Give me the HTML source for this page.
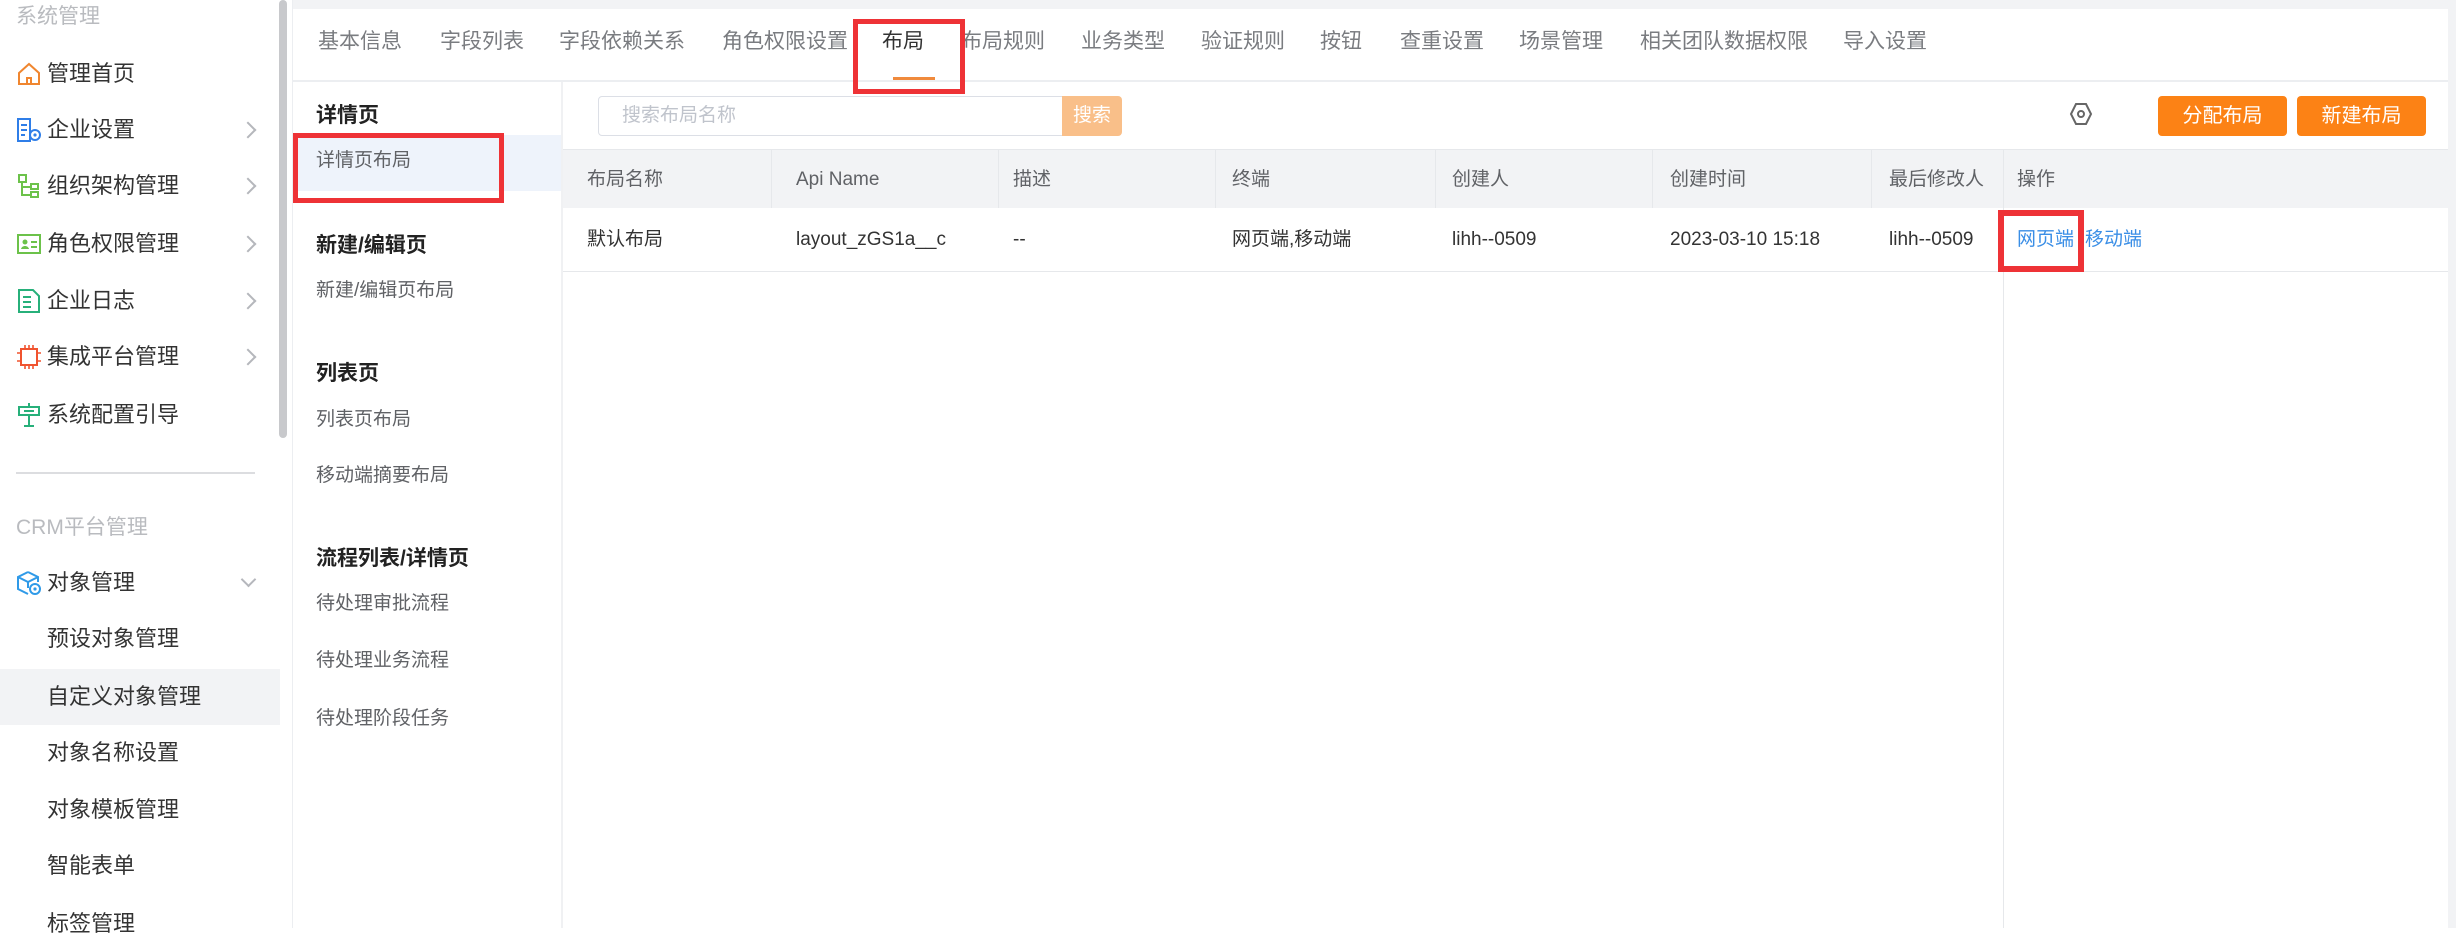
<!DOCTYPE html>
<html><head><meta charset="utf-8">
<style>
*{margin:0;padding:0;box-sizing:border-box}
body{width:2456px;height:928px;overflow:hidden;background:#fff;font-family:"Liberation Sans","Noto Sans CJK SC",sans-serif;position:relative}
.a{position:absolute;white-space:nowrap}
.sb{font-size:22px;color:#333;line-height:22px}
.ic{position:absolute;left:16px;width:26px;height:26px}
.chev{position:absolute;left:244px;width:12px;height:12px;border-right:2px solid #b5b7bc;border-top:2px solid #b5b7bc;transform:rotate(45deg)}
.tab{font-size:21px;color:#7a7c80;line-height:22px;top:31px}
.sn{font-size:19px;color:#606266;line-height:20px;left:316px}
.sh{font-size:21px;color:#222;font-weight:bold;line-height:22px;left:316px}
.th{font-size:19px;color:#606266;line-height:20px;top:170px}
.td{font-size:19px;color:#333;line-height:20px;top:230px}
.vl{position:absolute;width:1px;background:#e6e8eb}
</style></head><body>
<!-- sidebar -->
<div class="a" style="left:16px;top:6px;font-size:21px;color:#b9bbbf;line-height:22px">系统管理</div>
<svg class="ic" style="top:61px" viewBox="0 0 26 26"><path d="M3 12 L13 3 L23 12 V23 H3 Z M11 23 V17 H15 V23" fill="none" stroke="#f0862f" stroke-width="2"/></svg>
<div class="a sb" style="left:47px;top:63px">管理首页</div>
<svg class="ic" style="top:117px" viewBox="0 0 26 26"><rect x="2" y="2" width="12" height="22" fill="none" stroke="#2f7ee8" stroke-width="2"/><path d="M5 8h6M5 13h6M5 18h4" stroke="#2f7ee8" stroke-width="2"/><circle cx="19" cy="18" r="5" fill="#fff" stroke="#2f7ee8" stroke-width="2"/><circle cx="19" cy="18" r="1.6" fill="#2f7ee8"/></svg>
<div class="a sb" style="left:47px;top:119px">企业设置</div><div class="chev" style="top:124px;left:242px"></div>
<svg class="ic" style="top:173px" viewBox="0 0 26 26"><rect x="3" y="2" width="7" height="7" fill="none" stroke="#6cc24a" stroke-width="2"/><rect x="15" y="11" width="7" height="5" fill="none" stroke="#6cc24a" stroke-width="2"/><rect x="15" y="19" width="7" height="5" fill="none" stroke="#6cc24a" stroke-width="2"/><path d="M6 9V22H15M6 14H15" fill="none" stroke="#6cc24a" stroke-width="2"/></svg>
<div class="a sb" style="left:47px;top:175px">组织架构管理</div><div class="chev" style="top:180px;left:242px"></div>
<svg class="ic" style="top:231px" viewBox="0 0 26 26"><rect x="2" y="4" width="22" height="18" fill="none" stroke="#6cc24a" stroke-width="2"/><circle cx="9" cy="11" r="2.5" fill="#6cc24a"/><path d="M5 18c1-4 7-4 8 0z" fill="#6cc24a"/><path d="M15 11h6M15 16h6" stroke="#6cc24a" stroke-width="2"/></svg>
<div class="a sb" style="left:47px;top:233px">角色权限管理</div><div class="chev" style="top:238px;left:242px"></div>
<svg class="ic" style="top:288px" viewBox="0 0 26 26"><path d="M3 2H17L23 8V24H3Z" fill="none" stroke="#27b07a" stroke-width="2"/><path d="M7 9h8M7 14h8M7 19h8" stroke="#27b07a" stroke-width="2"/></svg>
<div class="a sb" style="left:47px;top:290px">企业日志</div><div class="chev" style="top:295px;left:242px"></div>
<svg class="ic" style="top:344px" viewBox="0 0 26 26"><rect x="5" y="5" width="16" height="16" fill="none" stroke="#f0532f" stroke-width="2"/><path d="M9 1v4M13 1v4M17 1v4M9 21v4M13 21v4M17 21v4M1 9h4M1 17h4M21 9h4M21 17h4" stroke="#f0532f" stroke-width="1.6"/></svg>
<div class="a sb" style="left:47px;top:346px">集成平台管理</div><div class="chev" style="top:351px;left:242px"></div>
<svg class="ic" style="top:402px" viewBox="0 0 26 26"><path d="M13 1v4M3 5h20v8H3zM3 13h20M13 13v12M8 24h10M8 9h10" fill="none" stroke="#27b07a" stroke-width="2"/></svg>
<div class="a sb" style="left:47px;top:404px">系统配置引导</div>
<div class="a" style="left:279px;top:0;width:8px;height:438px;background:#c8c9cc;border-radius:4px"></div>
<div class="a" style="left:16px;top:472px;width:239px;height:2px;background:#dcdde0"></div>
<div class="a" style="left:16px;top:517px;font-size:21px;color:#b9bbbf;line-height:22px">CRM平台管理</div>
<svg class="ic" style="top:570px" viewBox="0 0 26 26"><path d="M12 2L22 7V12M12 2L2 7V19L12 24M2 7L12 12L22 7M12 12V18" fill="none" stroke="#2f9ae8" stroke-width="2"/><circle cx="19" cy="19" r="5" fill="#fff" stroke="#2f9ae8" stroke-width="2"/><circle cx="19" cy="19" r="1.6" fill="#2f9ae8"/></svg>
<div class="a sb" style="left:47px;top:572px">对象管理</div>
<div class="a" style="left:243px;top:574px;width:11px;height:11px;border-right:2px solid #b5b7bc;border-bottom:2px solid #b5b7bc;transform:rotate(45deg)"></div>
<div class="a sb" style="left:47px;top:628px">预设对象管理</div>
<div class="a" style="left:0;top:669px;width:280px;height:56px;background:#f2f3f5"></div>
<div class="a sb" style="left:47px;top:686px">自定义对象管理</div>
<div class="a sb" style="left:47px;top:742px">对象名称设置</div>
<div class="a sb" style="left:47px;top:799px">对象模板管理</div>
<div class="a sb" style="left:47px;top:855px">智能表单</div>
<div class="a sb" style="left:47px;top:913px">标签管理</div>
<!-- main frame -->
<div class="a" style="left:292px;top:0;width:1px;height:928px;background:#eceef1"></div>
<div class="a" style="left:293px;top:0;width:2163px;height:9px;background:#f2f3f5"></div>
<div class="a" style="left:2448px;top:0;width:8px;height:928px;background:#f2f3f5"></div>
<div class="a" style="left:293px;top:80px;width:2155px;height:2px;background:#eceef1"></div>
<div class="a tab" style="left:318px">基本信息</div>
<div class="a tab" style="left:440px">字段列表</div>
<div class="a tab" style="left:559px">字段依赖关系</div>
<div class="a tab" style="left:722px">角色权限设置</div>
<div class="a tab" style="left:882px;color:#333">布局</div>
<div class="a tab" style="left:961px">布局规则</div>
<div class="a tab" style="left:1081px">业务类型</div>
<div class="a tab" style="left:1201px">验证规则</div>
<div class="a tab" style="left:1320px">按钮</div>
<div class="a tab" style="left:1400px">查重设置</div>
<div class="a tab" style="left:1519px">场景管理</div>
<div class="a tab" style="left:1640px">相关团队数据权限</div>
<div class="a tab" style="left:1843px">导入设置</div>
<div class="a" style="left:893px;top:77px;width:42px;height:3px;background:#f08a3c"></div>
<div class="a" style="left:853px;top:19px;width:112px;height:75px;border:5px solid #ee3236"></div>
<!-- subnav -->
<div class="a" style="left:561px;top:82px;width:2px;height:846px;background:#f0f1f3"></div>
<div class="a sh" style="top:105px">详情页</div>
<div class="a" style="left:293px;top:135px;width:268px;height:56px;background:#eef3fb"></div>
<div class="a sn" style="top:151px">详情页布局</div>
<div class="a" style="left:293px;top:133px;width:211px;height:70px;border:5px solid #ee3236"></div>
<div class="a sh" style="top:235px">新建/编辑页</div>
<div class="a sn" style="top:281px">新建/编辑页布局</div>
<div class="a sh" style="top:363px">列表页</div>
<div class="a sn" style="top:410px">列表页布局</div>
<div class="a sn" style="top:466px">移动端摘要布局</div>
<div class="a sh" style="top:548px">流程列表/详情页</div>
<div class="a sn" style="top:594px">待处理审批流程</div>
<div class="a sn" style="top:651px">待处理业务流程</div>
<div class="a sn" style="top:709px">待处理阶段任务</div>
<!-- toolbar -->
<div class="a" style="left:598px;top:96px;width:466px;height:40px;border:1px solid #dcdfe6;border-radius:4px 0 0 4px"></div>
<div class="a" style="left:622px;top:106px;font-size:19px;color:#c0c4cc;line-height:20px">搜索布局名称</div>
<div class="a" style="left:1062px;top:96px;width:60px;height:40px;background:#f9bf89;border-radius:0 4px 4px 0;color:#fff;font-size:19px;line-height:40px;text-align:center">搜索</div>
<svg class="a" style="left:2069px;top:102px" width="24" height="24" viewBox="0 0 24 24"><path d="M7 2H17L22 12L17 22H7L2 12Z" fill="none" stroke="#666" stroke-width="2"/><circle cx="12" cy="12" r="3" fill="none" stroke="#666" stroke-width="2"/></svg>
<div class="a" style="left:2158px;top:96px;width:129px;height:40px;background:#fc8215;border-radius:4px;color:#fff;font-size:20px;line-height:40px;text-align:center">分配布局</div>
<div class="a" style="left:2297px;top:96px;width:129px;height:40px;background:#fc8215;border-radius:4px;color:#fff;font-size:20px;line-height:40px;text-align:center">新建布局</div>
<!-- table -->
<div class="a" style="left:563px;top:149px;width:1885px;height:59px;background:#f2f3f5;border-top:1px solid #e6e8eb"></div>
<div class="vl" style="left:771px;top:149px;height:59px"></div>
<div class="vl" style="left:998px;top:149px;height:59px"></div>
<div class="vl" style="left:1215px;top:149px;height:59px"></div>
<div class="vl" style="left:1435px;top:149px;height:59px"></div>
<div class="vl" style="left:1652px;top:149px;height:59px"></div>
<div class="vl" style="left:1871px;top:149px;height:59px"></div>
<div class="vl" style="left:2003px;top:149px;height:779px"></div>
<div class="a" style="left:563px;top:271px;width:1885px;height:1px;background:#e6e8eb"></div>
<div class="a th" style="left:587px">布局名称</div>
<div class="a th" style="left:796px">Api Name</div>
<div class="a th" style="left:1013px">描述</div>
<div class="a th" style="left:1232px">终端</div>
<div class="a th" style="left:1452px">创建人</div>
<div class="a th" style="left:1670px">创建时间</div>
<div class="a th" style="left:1889px">最后修改人</div>
<div class="a th" style="left:2017px">操作</div>
<div class="a td" style="left:587px">默认布局</div>
<div class="a td" style="left:796px">layout_zGS1a__c</div>
<div class="a td" style="left:1013px">--</div>
<div class="a td" style="left:1232px">网页端,移动端</div>
<div class="a td" style="left:1452px">lihh--0509</div>
<div class="a td" style="left:1670px">2023-03-10 15:18</div>
<div class="a td" style="left:1889px">lihh--0509</div>
<div class="a td" style="left:2017px;color:#3a8ee6">网页端</div>
<div class="a td" style="left:2085px;color:#3a8ee6">移动端</div>
<div class="a" style="left:1998px;top:210px;width:86px;height:62px;border:6px solid #ee3236"></div>
</body></html>
